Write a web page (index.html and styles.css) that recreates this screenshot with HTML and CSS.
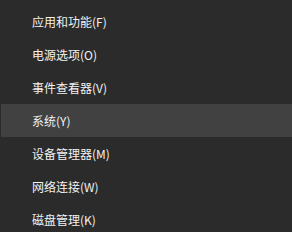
FILE: index.html
```html
<!doctype html>
<html>
<head>
    <meta charset="utf-8">
    <title>快速链接菜单</title>
    <link rel="stylesheet" href="styles.css">
</head>
<body>
<ul class="menu">
    <li class="item">应用和功能(F)</li>
    <li class="item">电源选项(O)</li>
    <li class="item">事件查看器(V)</li>
    <li class="item hover">系统(Y)</li>
    <li class="item">设备管理器(M)</li>
    <li class="item">网络连接(W)</li>
    <li class="item">磁盘管理(K)</li>
</ul>
</body>
</html>
```
FILE: styles.css
```css
html, body { margin: 0; padding: 0; background: #2b2b2b; overflow: hidden; }
body { font-family: "Noto Sans CJK SC", "Noto Sans", sans-serif; font-size: 12px; color: #f2f2f2; }
.menu { list-style: none; margin: 0; padding: 5px 0 0 1px; }
.item { height: 33px; line-height: 33px; padding-left: 31px; white-space: nowrap; }
.item.hover { background: #414141; }
```
